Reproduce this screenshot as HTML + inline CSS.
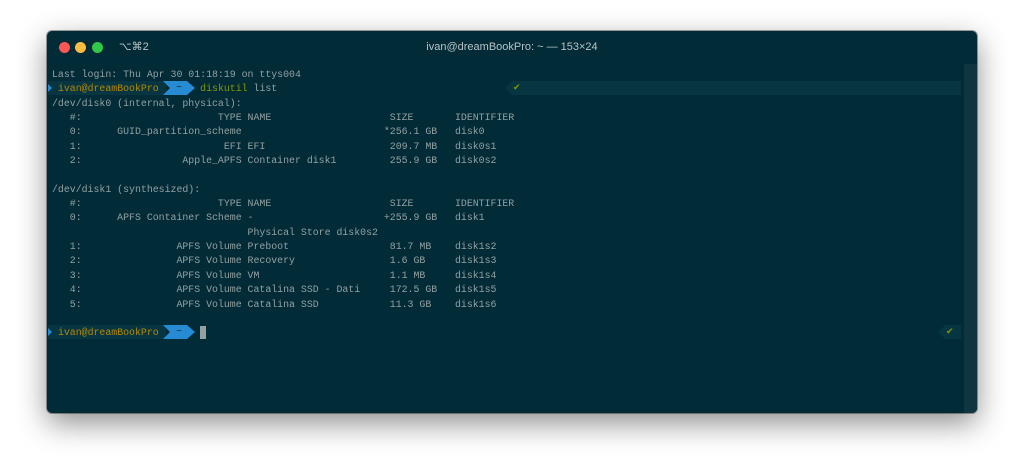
<!DOCTYPE html>
<html><head><style>
html,body{margin:0;padding:0;background:#fff;width:1024px;height:476px;overflow:hidden}
.win{position:absolute;left:47px;top:31px;width:930px;height:382px;background:#022b38;border-radius:5px;box-shadow:0 10px 30px rgba(0,0,0,.45),0 0 0 1px rgba(0,0,0,.35)}
.dot{position:absolute;top:11px;width:11px;height:11px;border-radius:50%}
.title{position:absolute;left:0;right:0;top:10px;text-align:center;font:11px "Liberation Sans",sans-serif;color:#b9c3c6}
.sc{position:absolute;left:72px;top:9px;font:11px "Liberation Sans","DejaVu Sans",sans-serif;color:#b9c3c6}
.sb{position:absolute;left:917px;top:33px;width:13px;height:349px;background:#0e3540;border-radius:0 0 5px 0}
pre{position:absolute;left:5px;top:37px;margin:0;font:9.9px/14.35px "Liberation Mono",monospace;color:#93a1a1}
.seg{position:absolute;height:14px}
.y{color:#b58900}.g{color:#859900}
</style></head><body>
<div class="win">
<div class="dot" style="left:12px;background:#fc5753"></div>
<div class="dot" style="left:28px;background:#fdbc40"></div>
<div class="dot" style="left:45px;background:#33c748"></div>
<div class="sc">⌥⌘2</div>
<div class="title">ivan@dreamBookPro: ~ — 153×24</div>
<div class="sb"></div>
<div class="seg" style="left:1px;top:50px;width:118px;background:#073642"></div>
<svg style="position:absolute;left:1px;top:53px" width="4" height="8"><path d="M0 0L4 4L0 8Z" fill="#268bd2"/></svg>
<svg style="position:absolute;left:116px;top:50px" width="32" height="14"><path d="M0 0H24L32 7L24 14H0L7 7Z" fill="#268bd2"/></svg>
<div style="position:absolute;left:129px;top:50px;font:9.9px/14px 'Liberation Mono',monospace;color:#0a2e3a">~</div>
<svg style="position:absolute;left:458px;top:50px" width="456" height="14"><path d="M0 7L7 0H456V14H7Z" fill="#073642"/></svg>
<div style="position:absolute;left:466px;top:50px;font:9px/14px 'DejaVu Sans',sans-serif;color:#859900">✔</div>
<div class="seg" style="left:1px;top:294px;width:118px;background:#073642"></div>
<svg style="position:absolute;left:1px;top:297px" width="4" height="8"><path d="M0 0L4 4L0 8Z" fill="#268bd2"/></svg>
<svg style="position:absolute;left:116px;top:294px" width="32" height="14"><path d="M0 0H24L32 7L24 14H0L7 7Z" fill="#268bd2"/></svg>
<div style="position:absolute;left:129px;top:294px;font:9.9px/14px 'Liberation Mono',monospace;color:#0a2e3a">~</div>
<div style="position:absolute;left:153px;top:295px;width:6px;height:13px;background:#93a1a1"></div>
<svg style="position:absolute;left:891px;top:294px" width="23" height="14"><path d="M0 7L7 0H23V14H7Z" fill="#073642"/></svg>
<div style="position:absolute;left:899px;top:294px;font:9px/14px 'DejaVu Sans',sans-serif;color:#859900">✔</div>
<pre>Last login: Thu Apr 30 01:18:19 on ttys004
 <span class="y">ivan@dreamBookPro</span>       <span class="g">diskutil</span> list
/dev/disk0 (internal, physical):
   #:                       TYPE NAME                    SIZE       IDENTIFIER
   0:      GUID_partition_scheme                        *256.1 GB   disk0
   1:                        EFI EFI                     209.7 MB   disk0s1
   2:                 Apple_APFS Container disk1         255.9 GB   disk0s2

/dev/disk1 (synthesized):
   #:                       TYPE NAME                    SIZE       IDENTIFIER
   0:      APFS Container Scheme -                      +255.9 GB   disk1
                                 Physical Store disk0s2
   1:                APFS Volume Preboot                 81.7 MB    disk1s2
   2:                APFS Volume Recovery                1.6 GB     disk1s3
   3:                APFS Volume VM                      1.1 MB     disk1s4
   4:                APFS Volume Catalina SSD - Dati     172.5 GB   disk1s5
   5:                APFS Volume Catalina SSD            11.3 GB    disk1s6

 <span class="y">ivan@dreamBookPro</span></pre>
</div>
</body></html>
